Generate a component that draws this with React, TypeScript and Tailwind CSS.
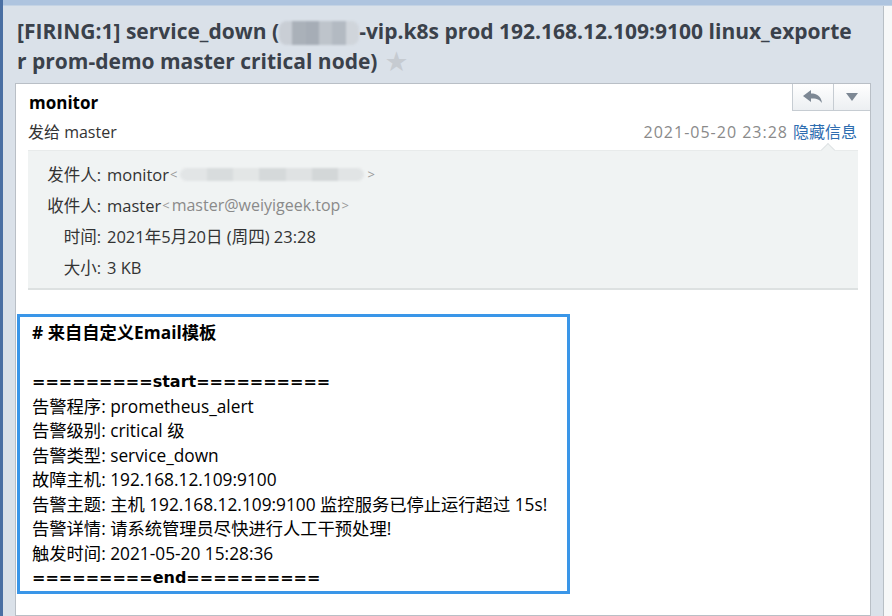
import { useState } from 'react';

const rows = [
  { label: '告警程序', value: 'prometheus_alert' },
  { label: '告警级别', value: 'critical 级' },
  { label: '告警类型', value: 'service_down' },
  { label: '故障主机', value: '192.168.12.109:9100' },
  { label: '告警主题', value: '主机 192.168.12.109:9100 监控服务已停止运行超过 15s!' },
  { label: '告警详情', value: '请系统管理员尽快进行人工干预处理!' },
  { label: '触发时间', value: '2021-05-20 15:28:36' },
];

function Blur({ w, h, shades }: { w: number; h: number; shades: string[] }) {
  return (
    <span
      className="inline-flex align-middle overflow-hidden rounded-[8px] blur-[1px]"
      style={{ width: w, height: h }}
    >
      {shades.map((c, i) => (
        <span key={i} className="flex-1" style={{ background: c }} />
      ))}
    </span>
  );
}

export default function App() {
  const [expanded, setExpanded] = useState(true);

  return (
    <div className="w-[892px] h-[616px] overflow-hidden flex bg-[#dae1e9] font-['Open_Sans','Noto_Sans_CJK_SC',sans-serif]">
      <div className="w-[3px] bg-[#4a6fa3]" />
      <div className="flex-1 flex flex-col">
        <div className="h-[6px] bg-[#aec4df] border-b border-[#c4d3e4]" />
        <div className="flex-1 flex min-h-0">
          <div className="flex-1 flex flex-col px-[12px] min-w-0">
            <h1 className="pt-[10px] pl-[2px] pr-[14px] text-[21px] leading-[30px] font-bold text-[#3a414b] break-all">
              [FIRING:1] service_down (
              <Blur w={80} h={24} shades={['#c9ced5', '#aab1b9', '#a6adb6', '#bec4cb', '#b3bac2', '#d0d5db']} />
              -vip.k8s prod 192.168.12.109:9100 linux_exporter prom-demo master critical node)
              <span className="ml-[8px] text-[22px] leading-[20px] text-[#c6cbd1]">★</span>
            </h1>

            <div className="mt-[7px] flex-1 bg-white border border-[#b9bfc6] flex flex-col">
              <div className="flex justify-between items-start">
                <div className="pl-[13px] pt-[9px] text-[17px] leading-[20px] font-bold text-black">monitor</div>
                <div className="flex">
                  <button className="w-[41px] h-[27px] flex items-center justify-center border-l border-b border-[#c6ccd2] bg-gradient-to-b from-white to-[#eceff2]">
                    <svg width="20" height="14" viewBox="0 0 20 14">
                      <path d="M0 6 L8 0 L8 3.5 C14 3.5 18 6 19 13 C16 9 13 8.5 8 8.5 L8 12 Z" fill="#7d8894" />
                    </svg>
                  </button>
                  <button className="w-[37px] h-[27px] flex items-center justify-center border-l border-b border-[#c6ccd2] bg-gradient-to-b from-white to-[#eceff2]">
                    <svg width="12" height="8" viewBox="0 0 12 8">
                      <path d="M0 0 L12 0 L6 8 Z" fill="#7d8894" />
                    </svg>
                  </button>
                </div>
              </div>

              <div className="mt-[8px] pl-[12px] pr-[13px] flex justify-between text-[16px] leading-[22px]">
                <span className="text-[#333]">发给 master</span>
                <span>
                  <span className="text-[#8a8a8a] tracking-[1px]">2021-05-20 23:28</span>
                  <span
                    className="ml-[5px] text-[#2e6db0] cursor-pointer relative"
                    onClick={() => setExpanded(!expanded)}
                  >
                    {expanded ? '隐藏信息' : '显示信息'}
                    <span className="absolute left-[30px] top-[24px] w-[10px] h-[10px] rotate-45 bg-[#f0f3f3] border-l border-t border-[#e0e4e6]" />
                  </span>
                </span>
              </div>

              {expanded && (
                <div className="mt-[7px] mx-[12px] pt-[8px] pb-[5px] bg-[#f0f3f3] border-t border-[#e8ebeb] border-b-2 border-b-[#dde1e1] text-[16.5px] leading-[31px] text-[#333]">
                  <div className="flex">
                    <span className="w-[73px] text-right">发件人:</span>
                    <span className="ml-[6px]">monitor</span>
                    <span className="text-[13px] text-[#999] ml-[1px]">&lt;</span>
                    <span className="ml-[3px] inline-flex items-center">
                      <Blur w={184} h={13} shades={['#e2e5e6', '#d8dcdd', '#e3e6e6', '#d5d9da', '#dfe2e3', '#d3d7d8', '#e1e4e5']} />
                    </span>
                    <span className="text-[13px] text-[#999] ml-[3px]">&gt;</span>
                  </div>
                  <div className="flex">
                    <span className="w-[73px] text-right">收件人:</span>
                    <span className="ml-[6px]">master</span>
                    <span className="text-[13px] text-[#999] ml-[1px]">&lt;</span>
                    <span className="ml-[2px] text-[16px] text-[#8a8a8a]">master@weiyigeek.top</span>
                    <span className="text-[13px] text-[#999] ml-[1px]">&gt;</span>
                  </div>
                  <div className="flex">
                    <span className="w-[73px] text-right">时间:</span>
                    <span className="ml-[6px]">2021年5月20日 (周四) 23:28</span>
                  </div>
                  <div className="flex">
                    <span className="w-[73px] text-right">大小:</span>
                    <span className="ml-[6px]">3 KB</span>
                  </div>
                </div>
              )}

              <div className="mt-[24px] ml-[1px] w-[553px] border-[3px] border-[#3a96e8] pl-[12px] pt-[4px] text-[17.3px] leading-[24.5px] text-black">
                <div className="font-bold"># 来自自定义Email模板</div>
                <div>&nbsp;</div>
                <div className="font-bold font-['DejaVu_Sans','Noto_Sans_CJK_SC',sans-serif] text-[16px]">=========start==========</div>
                {rows.map((r) => (
                  <div key={r.label}>
                    {r.label}: {r.value}
                  </div>
                ))}
                <div className="font-bold font-['DejaVu_Sans','Noto_Sans_CJK_SC',sans-serif] text-[16px]">=========end==========</div>
              </div>
            </div>
          </div>
          <div className="w-[9px] border-l border-[#b8bfc5] bg-[#f7f8f8]" />
        </div>
      </div>
    </div>
  );
}
